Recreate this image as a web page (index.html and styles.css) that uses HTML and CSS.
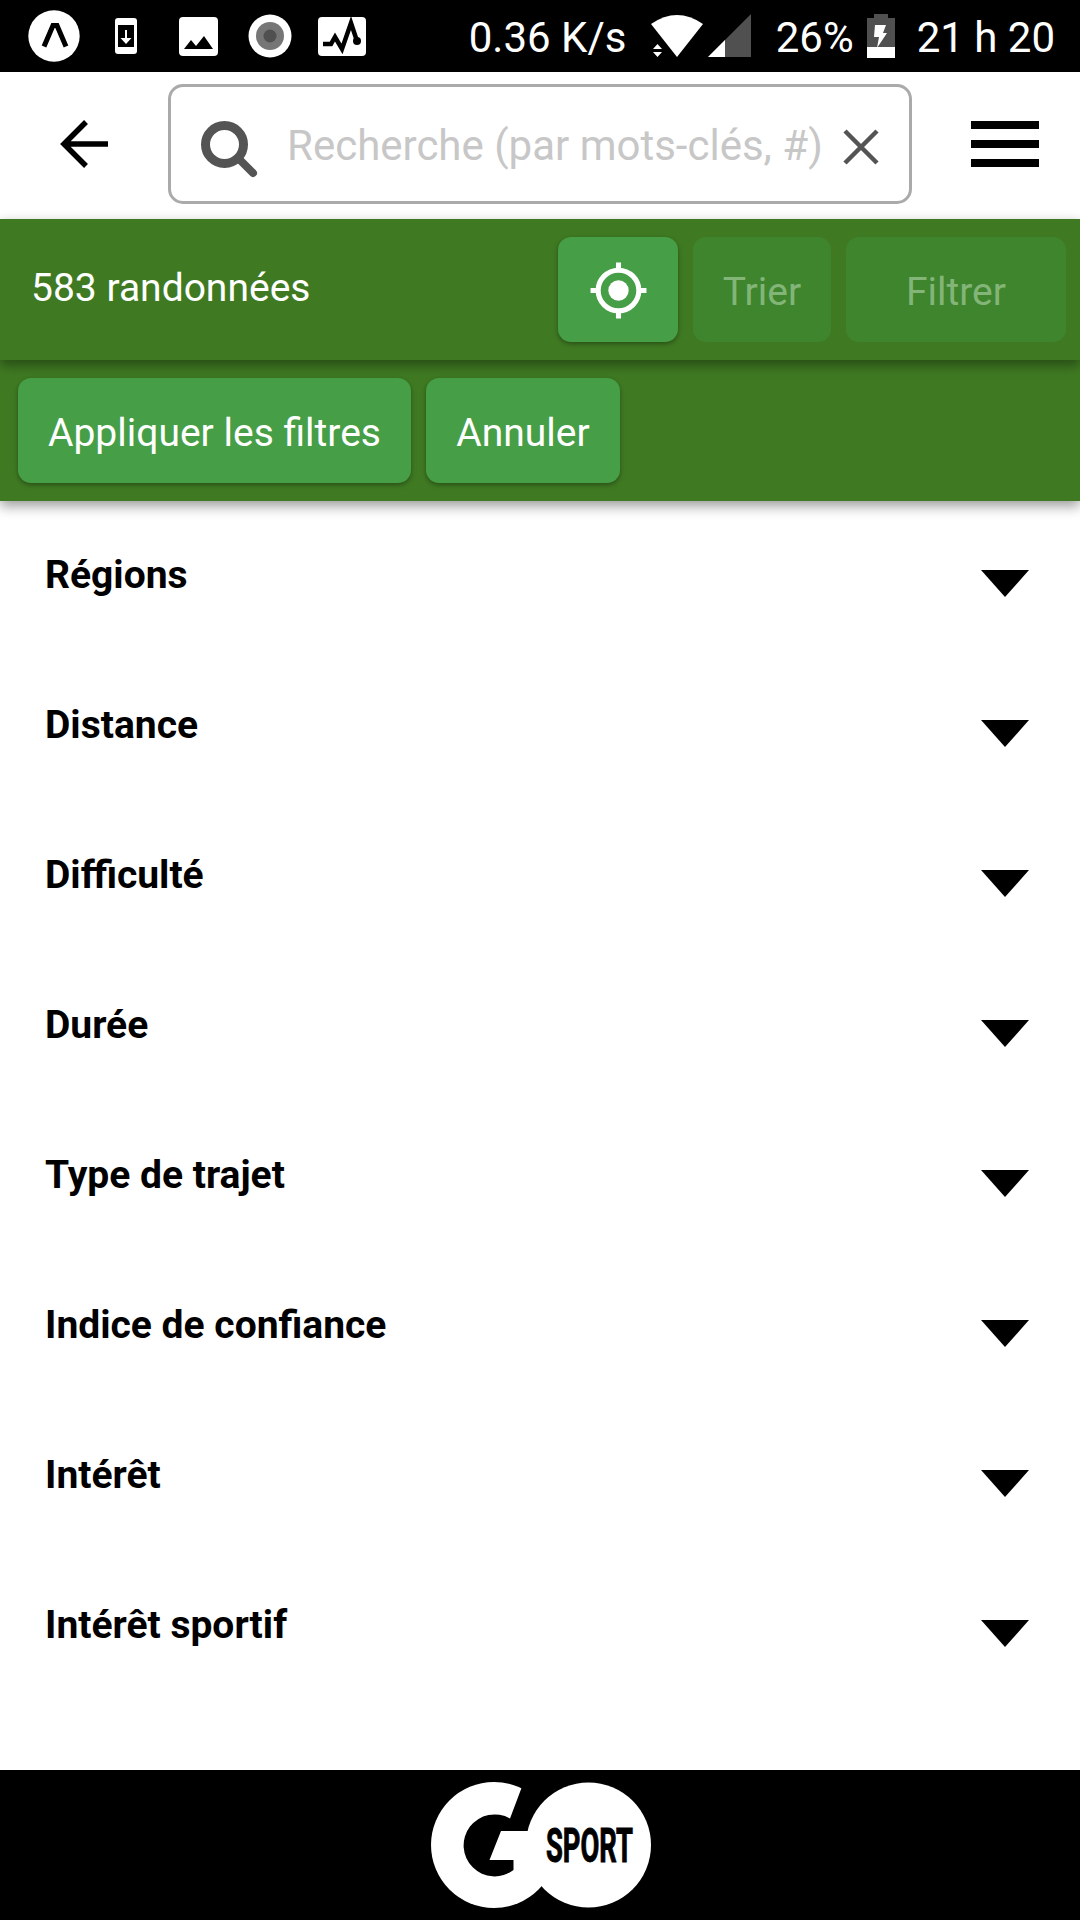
FILE: index.html
```html
<!DOCTYPE html>
<html lang="fr">
<head>
  <meta charset="UTF-8">
  <title>Randonnées</title>
  <meta name="viewport" content="width=device-width, initial-scale=1.0">

  <link rel="stylesheet" href="styles.css">
</head>
<body>

  <div class="statusbar">
    <div class="notifications">
      <svg width="52" height="52" viewBox="0 0 52 52">
        <circle cx="26" cy="26" r="25.7" fill="#fff"/>
        <path d="M16 36.500L25 15.500H29L38 36.500" fill="none" stroke="#000" stroke-width="5"/>
      </svg>
      <svg width="22" height="36" viewBox="0 0 22 36">
        <rect width="22" height="36" rx="3" fill="#fff"/>
        <rect x="3" y="7" width="16" height="22" fill="#000"/>
        <path d="M10 12h2v8h4.500L11 26l-5.500-6H10z" fill="#fff"/>
      </svg>
      <svg width="39" height="39" viewBox="0 0 39 39">
        <rect width="39" height="39" rx="4" fill="#fff"/>
        <path d="M5 32l7-9 5 6 8-10 9 13z" fill="#000"/>
      </svg>
      <svg width="44" height="44" viewBox="0 0 44 44">
        <circle cx="22" cy="22" r="21.500" fill="#fff"/>
        <circle cx="22" cy="22" r="14" fill="#767676"/>
        <circle cx="22" cy="22" r="6.500" fill="#505050"/>
      </svg>
      <svg width="48" height="39" viewBox="0 0 48 39">
        <rect width="48" height="39" rx="4" fill="#fff"/>
        <path d="M5 27h8l4-7 7 12L33 6l6 18" fill="none" stroke="#000" stroke-width="4.500"/>
        <circle cx="39" cy="24" r="4" fill="#000"/>
      </svg>
    </div>
    <span class="speed">0.36 K/s</span>
    <svg class="signal" width="100" height="44" viewBox="0 0 100 44">
      <path d="M0 10Q26-8 52 10L26 43z" fill="#fff"/>
      <path d="M2 35l4.500-5 4.500 5zM2 38h9l-4.500 5z" fill="#fff"/>
      <path d="M57 43L100 0v43z" fill="#505050"/>
      <path d="M57 43l17-17v17z" fill="#fff"/>
    </svg>
    <span class="percent">26%</span>
    <svg class="battery" width="28" height="44" viewBox="0 0 28 44">
      <path d="M0 4h7V0h14v4h7v29H0z" fill="#505050"/>
      <path d="M0 33h28v11H0z" fill="#fff"/>
      <path d="M8 11h11l-3 8h4L10 34l2-11H7z" fill="#fff"/>
    </svg>
    <span class="time">21 h 20</span>
  </div>

  <div class="header">
    <svg class="back" width="48" height="48" viewBox="0 0 48 48">
      <path d="M26 2L4 24l22 22M4 24h44" fill="none" stroke="#000" stroke-width="5.500"/>
    </svg>
    <div class="search">
      <svg class="magnifier" width="57" height="57" viewBox="0 0 57 57">
        <circle cx="23.500" cy="23.500" r="19" fill="none" stroke="#545454" stroke-width="9"/>
        <path d="M38 38l14 14" stroke="#545454" stroke-width="8" stroke-linecap="round"/>
      </svg>
      <span class="placeholder">Recherche (par mots-clés, #)</span>
      <svg class="clear" width="36" height="36" viewBox="0 0 36 36">
        <path d="M2 2l32 32M34 2L2 34" stroke="#545454" stroke-width="4.500"/>
      </svg>
    </div>
    <div class="menu">
      <span></span>
      <span></span>
      <span></span>
    </div>
  </div>

  <div class="toolbar results">
    <span class="count">583 randonnées</span>
    <button class="btn locate">
      <svg width="61" height="61" viewBox="0 0 24 24">
        <circle cx="12" cy="12" r="4" fill="#fff"/>
        <circle cx="12" cy="12" r="8" fill="none" stroke="#fff" stroke-width="2"/>
        <path d="M12 1v3M12 20v3M1 12h3M20 12h3" stroke="#fff" stroke-width="2"/>
      </svg>
    </button>
    <button class="btn sort" disabled>Trier</button>
    <button class="btn filter" disabled>Filtrer</button>
  </div>

  <div class="toolbar actions">
    <button class="btn apply">Appliquer les filtres</button>
    <button class="btn cancel">Annuler</button>
  </div>

  <ul class="filters">
    <li>Régions</li>
    <li>Distance</li>
    <li>Difficulté</li>
    <li>Durée</li>
    <li>Type de trajet</li>
    <li>Indice de confiance</li>
    <li>Intérêt</li>
    <li>Intérêt sportif</li>
  </ul>

  <div class="footer">
    <svg class="logo" width="220" height="128" viewBox="0 0 220 128">
      <circle cx="63" cy="63" r="63" fill="#fff"/>
      <!-- opening of the G -->
      <path d="M90.500 6L79 36.500A31 31 0 1 0 82.500 88V78H58.500L70 49H128V0H93z" fill="#000"/>
      <circle cx="157.500" cy="63" r="62.500" fill="#fff"/>
      <text class="brand" transform="translate(115 79.500) scale(0.570 1)">SPORT</text>
    </svg>
  </div>

</body>
</html>
```
FILE: styles.css
```css
* {
  box-sizing: border-box;
}

body {
  font-family: Roboto, sans-serif;
  margin: 0;
  height: 1920px;
  display: flex;
  flex-direction: column;
  background: #fff;
  color: #000;
  overflow: hidden;
}

svg {
  display: block;
  flex: none;
}

.statusbar {
  display: flex;
  align-items: center;
  height: 72px;
  padding: 0 25px 0 28px;
  background: #000;
  color: #fff;
  font-size: 42px;
  line-height: 70px;
  white-space: nowrap;
}

.notifications {
  display: flex;
  align-items: center;
  width: 441px;
}

.notifications svg:nth-child(2) {
  margin-left: 35px;
}

.notifications svg:nth-child(3) {
  margin-left: 42px;
}

.notifications svg:nth-child(4) {
  margin-left: 30px;
}

.notifications svg:nth-child(5) {
  margin-left: 26px;
}

.speed {
  width: 182px;
  padding-top: 4px;
}

.percent {
  width: 116px;
  padding: 4px 0 0 25px;
}

.time {
  padding: 4px 0 0 22px;
}

.header {
  display: flex;
  align-items: center;
  height: 147px;
  padding: 0 41px 3px 60px;
}

.search {
  display: flex;
  align-items: center;
  width: 744px;
  height: 120px;
  margin-left: 60px;
  padding: 0 30px;
  border: 3px solid #aaa;
  border-radius: 15px;
}

.magnifier {
  margin-top: 10px;
}

.placeholder {
  width: 584px;
  padding: 3px 0 0 29px;
  color: #c7c7c7;
  font-size: 42px;
  white-space: nowrap;
}

.clear {
  margin: 6px 0 0 2px;
}

.menu {
  display: flex;
  flex-direction: column;
  gap: 11px;
  margin-left: auto;
}

.menu span {
  width: 68px;
  height: 8px;
  background: #000;
}

.toolbar {
  display: flex;
  align-items: center;
  gap: 15px;
  height: 141px;
  background: #3f7a22;
  box-shadow: 0 5px 12px rgba(0, 0, 0, 0.4);
}

.results {
  position: relative;
  z-index: 2;
  padding: 0 14px 0 30px;
}

.actions {
  position: relative;
  z-index: 1;
  padding: 0 18px;
}

.count {
  margin-right: auto;
  padding: 0 0 4px 1px;
  color: #fff;
  font-size: 39px;
}

.btn {
  display: flex;
  align-items: center;
  justify-content: center;
  height: 105px;
  padding: 5px 0 0;
  border: none;
  border-radius: 13px;
  background: #469e46;
  color: #fff;
  font-family: inherit;
  font-size: 39px;
  box-shadow: 0 2px 5px rgba(0, 0, 0, 0.35);
}

.btn:disabled {
  background: #3f852e;
  color: #83b578;
  box-shadow: none;
}

.locate {
  width: 120px;
  padding: 1px 0 0;
}

.sort {
  width: 138px;
}

.filter {
  width: 220px;
}

.apply {
  width: 393px;
}

.cancel {
  width: 194px;
}

.filters {
  flex: 1;
  margin: 0;
  padding: 0 51px 0 45px;
  list-style: none;
}

.filters li {
  display: flex;
  align-items: center;
  justify-content: space-between;
  height: 150px;
  padding-bottom: 2px;
  font-size: 39px;
  font-weight: bold;
}

.filters li::after {
  content: "";
  margin-top: 16px;
  border: 24px solid transparent;
  border-top: 27px solid #000;
  border-bottom: 0;
}

.footer {
  display: flex;
  justify-content: center;
  height: 150px;
  padding: 12px 0 0 2px;
  background: #000;
}

.logo {
  overflow: visible;
}

.brand {
  font-family: Roboto, sans-serif;
  font-size: 48px;
  font-weight: bold;
  stroke: #000;
  stroke-width: 1px;
}
```
